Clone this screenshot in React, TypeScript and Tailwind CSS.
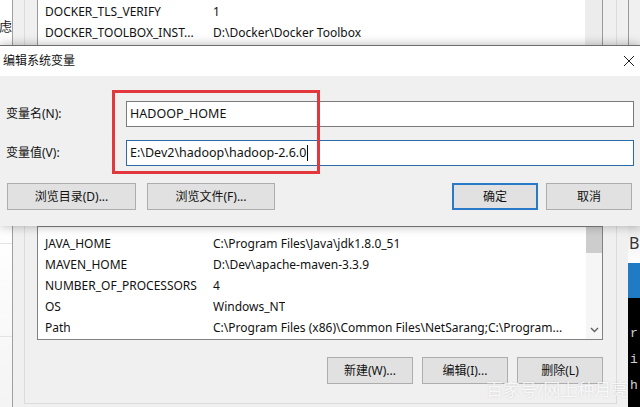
import React from 'react';

const font = "font-['Noto_Sans','Noto_Sans_CJK_SC',sans-serif]";

interface RowProps {
  name: string;
  value: string;
}

const Row: React.FC<RowProps> = ({ name, value }) => (
  <div className="flex h-[21px] items-center whitespace-nowrap text-[12px] text-[#111]">
    <span className="w-[175px] shrink-0 pl-[7px]">{name}</span>
    <span className="overflow-hidden">{value}</span>
  </div>
);

const WinButton: React.FC<{ label: string; className?: string; primary?: boolean }> = ({
  label,
  className = '',
  primary,
}) => (
  <button
    type="button"
    className={`flex h-[27px] items-center justify-center bg-[#e1e1e1] text-[12px] text-[#111] ${
      primary ? 'border-2 border-[#2a78c8]' : 'border border-[#adadad]'
    } ${className}`}
  >
    {label}
  </button>
);

const App: React.FC = () => {
  return (
    <div className={`relative h-[407px] w-[640px] overflow-hidden bg-[#f0f0f0] ${font}`}>
      {/* background window, upper part */}
      <div className="flex h-[45px]">
        <div className="flex w-[12px] justify-end overflow-hidden bg-white pt-[18px]">
          <span className="shrink-0 text-[13px] leading-[16px] text-[#222]">虑</span>
        </div>
        <div className="w-px bg-[#a0a0a0]" />
        <div className="w-[11px]" />
        <div className="w-px bg-[#dcdcdc]" />
        <div className="w-[12px]" />
        <div className="flex w-[566px] border-x border-[#9a9a9a] bg-white">
          <div className="flex-1 pt-px">
            <Row name="DOCKER_TLS_VERIFY" value="1" />
            <Row name="DOCKER_TOOLBOX_INST..." value="D:\Docker\Docker Toolbox" />
          </div>
          <div className="w-[17px] bg-[#ececec]" />
        </div>
        <div className="w-[13px]" />
        <div className="w-px bg-[#dcdcdc]" />
        <div className="w-[11px]" />
        <div className="w-[12px] border-l border-[#9a9a9a]" />
      </div>

      {/* dialog */}
      <div className="relative z-10 border-t border-[#6e6e6e] shadow-[0_0_10px_rgba(0,0,0,0.3)]">
        <div className="flex h-[30px] items-center justify-between bg-white pl-[3px] pr-[4px]">
          <span className="text-[12px] text-[#111]">编辑系统变量</span>
          <svg width="12" height="12" viewBox="0 0 12 12" className="mr-[1px]">
            <path d="M1 1L11 11M11 1L1 11" stroke="#222" strokeWidth="1" fill="none" />
          </svg>
        </div>
        <div className="relative h-[150px] bg-[#f0f0f0] pt-[25px]">
          <div className="flex items-center pl-[6px]">
            <span className="w-[120px] text-[12px] text-[#111]">变量名(N):</span>
            <div className="flex h-[26px] w-[508px] items-center border border-[#7a7a7a] bg-white pl-[3px] text-[12.5px] text-[#111]">
              HADOOP_HOME
            </div>
          </div>
          <div className="mt-[13px] flex items-center pl-[6px]">
            <span className="w-[120px] text-[12px] text-[#111]">变量值(V):</span>
            <div className="flex h-[26px] w-[508px] items-center border border-[#2a6aa8] bg-white pl-[3px] text-[12.5px] text-[#111]">
              E:\Dev2\hadoop\hadoop-2.6.0
              <span className="ml-px h-[16px] w-px bg-black" />
            </div>
          </div>
          <div className="mt-[17px] flex items-center pl-[7px] pr-[8px]">
            <WinButton label="浏览目录(D)..." className="w-[129px]" />
            <WinButton label="浏览文件(F)..." className="ml-[11px] w-[128px]" />
            <div className="flex-1" />
            <WinButton label="确定" primary className="w-[86px]" />
            <WinButton label="取消" className="ml-[8px] w-[86px]" />
          </div>
          {/* red annotation frame */}
          <div className="absolute left-[112px] top-[14px] h-[84px] w-[208px] border-[3px] border-[#e2383d]" />
        </div>
      </div>

      {/* background window, lower part */}
      <div className="flex h-[181px]">
        <div className="flex w-[12px] flex-col bg-gradient-to-b from-white to-[#f4f4f4]">
          <div className="h-[18px] border-b border-[#e4e4e4]" />
          <div className="h-[93px] border-b border-[#e4e4e4]" />
        </div>
        <div className="w-px bg-[#a0a0a0]" />
        <div className="w-[11px]" />
        <div className="h-[178px] w-[593px] border-x border-b border-[#dcdcdc] pl-[12px]">
          <div className="flex h-[114px] w-[566px] border border-[#828282] bg-white">
            <div className="flex-1 pt-[6px]">
              <Row name="JAVA_HOME" value="C:\Program Files\Java\jdk1.8.0_51" />
              <Row name="MAVEN_HOME" value="D:\Dev\apache-maven-3.3.9" />
              <Row name="NUMBER_OF_PROCESSORS" value="4" />
              <Row name="OS" value="Windows_NT" />
              <Row name="Path" value="C:\Program Files (x86)\Common Files\NetSarang;C:\Program..." />
            </div>
            <div className="flex w-[16px] flex-col bg-[#f6f6f6]">
              <div className="h-[26px] bg-[#cdcdcd]" />
              <div className="flex-1" />
              <div className="flex h-[18px] items-center justify-center">
                <svg width="9" height="6" viewBox="0 0 9 6">
                  <path d="M1 1L4.5 4.5L8 1" stroke="#606060" strokeWidth="1.4" fill="none" />
                </svg>
              </div>
            </div>
          </div>
          <div className="mt-[17px] flex w-[566px] justify-end gap-[9px]">
            <WinButton label="新建(W)..." className="w-[86px]" />
            <WinButton label="编辑(I)..." className="w-[86px]" />
            <WinButton label="删除(L)" className="w-[86px]" />
          </div>
        </div>
        <div className="w-[11px]" />
        <div className="flex w-[12px] flex-col overflow-hidden">
          <div className="flex h-[37px] items-start bg-gradient-to-b from-[#e8e8e8] to-white pl-px pt-[6px]">
            <span className="text-[16px] leading-[22px] text-[#333]">B</span>
          </div>
          <div className="h-[35px] bg-[#1f7cc4]" />
          <div className="flex-1 bg-black pl-[2px] pt-[23px] font-['Liberation_Mono',monospace] text-[13px] leading-[26px] text-[#d0d0d0]">
            <div>r</div>
            <div>i</div>
            <div>h</div>
          </div>
        </div>
      </div>

      {/* watermark */}
      <div className="absolute left-[486px] top-[377px] z-20 whitespace-nowrap text-[17px] text-white/80 [text-shadow:0_0_2px_rgba(0,0,0,0.15)]">
        百家号/网上种月亮
      </div>
    </div>
  );
};

export default App;
